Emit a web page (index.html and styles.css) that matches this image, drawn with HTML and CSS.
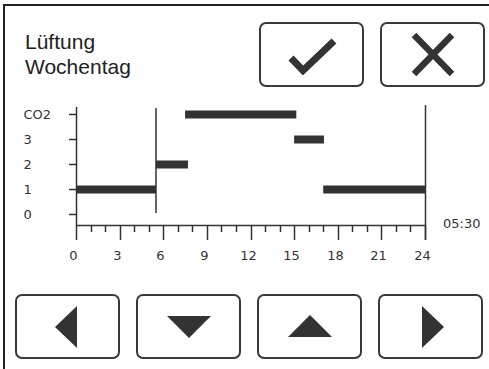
FILE: index.html
```html
<!DOCTYPE html>
<html lang="de">
<head>
    <meta charset="UTF-8">
    <title>Lüftung Wochentag</title>
    <link rel="stylesheet" href="styles.css">
</head>
<body>
    <div class="frame">
        <div class="header">
            <div class="title">Lüftung<br>Wochentag</div>
            <div class="actions">
                <button class="btn" type="button">
                    <svg width="60" height="40" viewBox="0 0 60 40">
                        <polyline points="9,23 21,35.5 52,6" fill="none" stroke="#333" stroke-width="7"/>
                    </svg>
                </button>
                <button class="btn" type="button">
                    <svg width="60" height="50" viewBox="0 0 60 50">
                        <path d="M11,5 L49,44 M49,5 L11,44" stroke="#333" stroke-width="6.5"/>
                    </svg>
                </button>
            </div>
        </div>

        <svg id="chart" class="chart" width="484" height="195" viewBox="5 87 484 195"></svg>

        <div class="nav">
            <button class="btn" type="button">
                <svg width="40" height="50" viewBox="0 0 40 50"><polygon points="7,25 29,4 29,46" fill="#333"/></svg>
            </button>
            <button class="btn" type="button">
                <svg width="50" height="40" viewBox="0 0 50 40"><polygon points="3,9 47,9 25,31" fill="#333"/></svg>
            </button>
            <button class="btn" type="button">
                <svg width="50" height="40" viewBox="0 0 50 40"><polygon points="3,30 47,30 25,8" fill="#333"/></svg>
            </button>
            <button class="btn" type="button">
                <svg width="40" height="50" viewBox="0 0 40 50"><polygon points="11,4 11,46 33,25" fill="#333"/></svg>
            </button>
        </div>
    </div>

    <script>
        const NS = 'http://www.w3.org/2000/svg';
        const chart = document.getElementById('chart');

        const x0 = 76, x1 = 425;
        const hour = (x1 - x0) / 24;
        const axisY = 225.5;
        const levels = { 0: 214.5, 1: 189.5, 2: 164.5, 3: 139.5, 4: 114.5 };
        const labels = ['0', '1', '2', '3', 'CO2'];

        // Zeitplan: von, bis, Stufe
        const schedule = [
            [0, 5.5, 1],
            [5.5, 7.7, 2],
            [7.5, 15.15, 4],
            [15, 17.05, 3],
            [17, 24, 1]
        ];

        function add(tag, attrs, text) {
            const el = document.createElementNS(NS, tag);
            for (const k in attrs) el.setAttribute(k, attrs[k]);
            if (text !== undefined) el.textContent = text;
            chart.appendChild(el);
            return el;
        }

        const hx = h => x0 + h * hour;

        // Balken
        schedule.forEach(([from, to, lvl]) => {
            add('rect', { x: hx(from), y: levels[lvl] - 4, width: hx(to) - hx(from), height: 8, class: 'bar' });
        });

        // Y-Achse
        add('line', { x1: x0 + 0.5, y1: 107, x2: x0 + 0.5, y2: axisY, class: 'axis' });
        labels.forEach((label, i) => {
            const y = levels[i];
            add('line', { x1: 69, y1: y, x2: x0, y2: y, class: 'axis' });
            add('text', { x: 23.5, y: y + 4.5, class: 'lbl' }, label);
        });

        // X-Achse
        add('line', { x1: x0, y1: axisY, x2: x1, y2: axisY, class: 'axis' });
        for (let h = 0; h <= 24; h++) {
            const x = Math.round(hx(h)) + 0.5;
            const major = h % 3 === 0;
            add('line', { x1: x, y1: axisY, x2: x, y2: major ? 240 : 232, class: 'axis' });
            if (major) add('text', { x: x - 3, y: 259.5, class: 'lbl', 'text-anchor': 'middle' }, h);
        }

        // rechte Begrenzung und aktuelle Zeit
        add('line', { x1: x1 + 0.5, y1: 105, x2: x1 + 0.5, y2: 240, class: 'axis' });
        add('line', { x1: hx(5.5), y1: 108, x2: hx(5.5), y2: 213, class: 'axis' });
        add('text', { x: 443, y: 228, class: 'lbl' }, '05:30');
    </script>
</body>
</html>
```

FILE: styles.css
```css
body {
    margin: 0;
    background-color: #fff;
    font-family: "Liberation Sans", Arial, sans-serif;
    color: #222;
}

.frame {
    margin: 4px 0 0 3px;
    height: 365px;
    border-left: 2px solid #222;
    border-top: 2px solid #222;
    box-sizing: border-box;
}

.header {
    display: flex;
    justify-content: space-between;
    padding: 16px 4px 0 20px;
}

.title {
    padding-top: 7px;
    font-size: 21px;
    line-height: 25px;
}

.actions {
    display: flex;
    gap: 16px;
}

.btn {
    width: 105px;
    height: 65px;
    padding: 0;
    border: 2px solid #3a3a3a;
    border-radius: 7px;
    background-color: #fff;
    display: flex;
    align-items: center;
    justify-content: center;
}

.chart {
    display: block;
}

.chart .bar {
    fill: #333;
}

.chart .axis {
    stroke: #333;
    stroke-width: 1.5;
}

.chart .lbl {
    font-family: "DejaVu Sans", Verdana, sans-serif;
    font-size: 13px;
    fill: #333;
}

.nav {
    display: flex;
    gap: 16px;
    padding: 12px 0 0 10px;
}
```
